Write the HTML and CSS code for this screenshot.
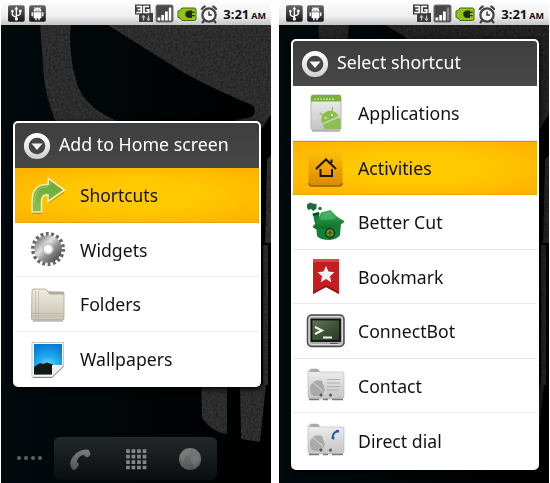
FILE: index.html
```html
<!DOCTYPE html>
<html lang="en">
<head>
<meta charset="utf-8">
<title>Home screen shortcuts</title>
<link rel="stylesheet" href="styles.css">
</head>
<body>
<svg class="defs" width="0" height="0" aria-hidden="true">
  <defs>
    <linearGradient id="dark" x1="0" y1="0" x2="0" y2="1"><stop offset="0" stop-color="#666"/><stop offset="1" stop-color="#161616"/></linearGradient>
    <linearGradient id="ring" x1="0" y1="0" x2="0" y2="1"><stop offset="0" stop-color="#fff"/><stop offset="1" stop-color="#d2d2d2"/></linearGradient>
    <linearGradient id="green" x1="0" y1="0" x2="0" y2="1"><stop offset="0" stop-color="#62a838"/><stop offset="1" stop-color="#8cc152"/></linearGradient>
    <linearGradient id="metal" x1="0" y1="0" x2="1" y2="1"><stop offset="0" stop-color="#888"/><stop offset=".35" stop-color="#e2e2e2"/><stop offset=".6" stop-color="#999"/><stop offset="1" stop-color="#555"/></linearGradient>
    <linearGradient id="paper" x1="0" y1="0" x2="0" y2="1"><stop offset="0" stop-color="#efebe0"/><stop offset="1" stop-color="#c9c3b4"/></linearGradient>
    <linearGradient id="silver" x1="0" y1="0" x2="0" y2="1"><stop offset="0" stop-color="#f0f0f0"/><stop offset="1" stop-color="#c4c4c4"/></linearGradient>
    <radialGradient id="sky" cx=".5" cy=".8" r=".8"><stop offset="0" stop-color="#8fe3ff"/><stop offset=".5" stop-color="#22aaf0"/><stop offset="1" stop-color="#087bd6"/></radialGradient>
    <linearGradient id="amber" x1="0" y1="0" x2="0" y2="1"><stop offset="0" stop-color="#ffbe0a"/><stop offset="1" stop-color="#d98a00"/></linearGradient>
    <linearGradient id="hut" x1="0" y1="0" x2="0" y2="1"><stop offset="0" stop-color="#3bb05b"/><stop offset="1" stop-color="#0a6a2a"/></linearGradient>
    <linearGradient id="screen" x1="0" y1="0" x2="1" y2="1"><stop offset="0" stop-color="#63785a"/><stop offset=".5" stop-color="#3f5539"/><stop offset="1" stop-color="#263a24"/></linearGradient>
    <linearGradient id="dockicon" x1="0" y1="0" x2="0" y2="1"><stop offset="0" stop-color="#7c7c7c"/><stop offset="1" stop-color="#545454"/></linearGradient>
    <clipPath id="page"><rect x="6" y="9" width="28.500" height="27"/></clipPath>
    <filter id="grain" x="0" y="0" width="1" height="1"><feTurbulence type="fractalNoise" baseFrequency=".4" numOctaves="3" seed="4" result="n"/><feColorMatrix in="n" type="matrix" values="0 0 0 0 0  0 0 0 0 0  0 0 0 0 0  1.2 0 0 0 -.5" result="m"/><feComposite in="m" in2="SourceGraphic" operator="in" result="d"/><feMerge><feMergeNode in="SourceGraphic"/><feMergeNode in="d"/></feMerge></filter>
    <symbol id="i-status" viewBox="0 0 40 18">
      <rect x="0" y="1" width="17" height="17" rx="2" fill="url(#dark)"/><rect x="21.500" y="1" width="17" height="17" rx="2" fill="url(#dark)"/>
      <path d="M8.500 4v11M4.500 7v3.500q0 1.500 4 2.500M12.500 7v2.500q0 1.500-4 2.500" fill="none" stroke="#fff" stroke-width="1.400"/><path d="M6.500 5.500l2-3 2 3z" fill="#fff"/><circle cx="8.500" cy="15" r="1.600" fill="#fff"/><circle cx="4.500" cy="7" r="1.300" fill="#fff"/><path d="M11.200 5.700h2.600v2.600h-2.600z" fill="#fff"/>
      <path d="M26 7.500a4 4 0 0 1 8 0zM26 8.300h8v5.200q0 .8-.8.800h-.9v2h-1.500v-2h-1.600v2h-1.500v-2h-.9q-.8 0-.8-.8zM23.900 8.300h1.400v4h-1.400zM34.700 8.300h1.400v4h-1.400z" fill="#fff"/><path d="M27 3l1.200 1.700M33 3l-1.200 1.700" stroke="#fff" stroke-width=".8"/><path d="M28.200 5.700h.9v.9h-.9zM31 5.700h.9v.9H31z" fill="#444"/>
    </symbol>
    <symbol id="i-signals" viewBox="0 0 82 20">
      <path d="M0 .5h15.500v8.500h2.500v9H4V10.500H0z" fill="#3c3c3c"/><path d="M1.500 2.500h4.800v6H1.300M2.500 5.500h3.700M14 2.500H9v6h4.700V5.800h-2.400" fill="none" stroke="#fff" stroke-width="1.700"/><path d="M8.500 16.500v-4M7 13.700l1.500-1.900 1.500 1.900M13.500 11.500v4.500M12 14.500l1.500 1.900 1.500-1.900" fill="none" stroke="#bbb" stroke-width="1.200"/>
      <rect x="21" y="1" width="17" height="17" rx="1.500" fill="#484848" stroke="#777"/><path d="M22.500 13.500h2.800v3h-2.800zM26.300 11h2.800v5.500h-2.800zM30 7.500h2.800v9H30z" fill="#fff"/><path d="M33.800 3.500h2.500v13h-2.500z" fill="currentColor"/>
      <path d="M47 4h12.500q1.500 0 1.500 1.500v9.500q0 1.500-1.500 1.500H47l-2-2.500-2-.5V7l2-.5z" fill="#8fc414" stroke="#476b0a"/><path d="M50 10q1-3.500 4-3.500h3v1.300h2.500v1.200H57v2h2.500v1.200H57V14h-3q-3 0-4-4z" fill="#232b12"/>
      <path d="M69.500 16l-2.500 3M78.500 16l2.500 3" stroke="#3a3a3a" stroke-width="2"/><circle cx="74" cy="11" r="6.600" fill="#f8f8f8" stroke="#444" stroke-width="2.300"/><path d="M74 7.500V11h3" fill="none" stroke="#333" stroke-width="1.400"/><path d="M66.300 5.800a9 9 0 0 1 4.200-3.800M81.700 5.800a9 9 0 0 0-4.200-3.800" stroke="#444" stroke-width="2" fill="none"/>
    </symbol>
    <symbol id="i-down" viewBox="0 0 28 28">
      <circle cx="14" cy="14" r="10.700" fill="#444" stroke="url(#ring)" stroke-width="4.800"/><path d="M8.500 11.500h11L14 18z" fill="#f4f4f4"/>
    </symbol>
    <symbol id="i-wall" viewBox="0 0 271 459">
      <g fill="#303030" filter="url(#grain)"><path d="M39 0h31q-3 28 5 56 6 25 37 39l14 8v28H70Q48 90 43 55zM105 0h166v90q-6 5-12 20h-24v-14l16-3q6-6 0-12-30-12-66-31zM266 135l5-4v88h-7zM200 361h26v49q-14-1-25-16zM239 361h26l-6 57-19-3z"/><path d="M262 221h5v140h-5z"/></g>
    </symbol>
  </defs>
</svg>
<main class="screens">
  <section class="phone">
    <svg class="wall"><use href="#i-wall"/></svg>
    <header class="status"><svg class="left"><use href="#i-status"/></svg><svg class="right"><use href="#i-signals"/></svg><div class="clock"><b>3:21</b><b class="am">AM</b></div></header>
    <div class="dialog home">
      <h1 class="title"><svg><use href="#i-down"/></svg><span>Add to Home screen</span></h1>
      <ul>
        <li class="on"><svg viewBox="0 0 40 40"><path d="M4 37V27Q4 9 20 9.500L20.500 3.500 36.500 15 20 26.500V20Q13 19 13.500 29v8z" fill="url(#green)" stroke="#f4edb0" stroke-width="1.600"/><path d="M4.500 38.300h9.500M21 27.800L36.500 17" stroke="#845f12" opacity=".55"/><path d="M6 28Q6 12 20 11.500M22 11V7" stroke="#b5dc86" fill="none" opacity=".7"/></svg><span>Shortcuts</span></li>
        <li><svg viewBox="0 0 40 40"><circle cx="20" cy="20" r="14.800" fill="none" stroke="#666" stroke-width="4.400" stroke-dasharray="2.800 2.366"/><circle cx="20" cy="20" r="9.500" fill="none" stroke="url(#metal)" stroke-width="8.500"/><circle cx="20" cy="20" r="5" fill="#fff" stroke="#bbb" stroke-width="1.600"/></svg><span>Widgets</span></li>
        <li><svg viewBox="0 0 40 40"><path d="M4 7q0-2 2-2h11q2 0 3 3h15q1 0 1 1.500V34q0 2-2 2H5q-1.500 0-1.500-2z" fill="url(#paper)" stroke="#aaa390" stroke-width=".8"/><path d="M19.500 7.500l2 3H36V8z" fill="#b0a996"/><path d="M4 29.500h32M4 32h32M7.500 7v27M10.500 7v27" stroke="#b8b09e" stroke-width=".6"/><path d="M5 37h30" stroke="#999"/></svg><span>Folders</span></li>
        <li><svg viewBox="0 0 40 40"><path d="M4 3.500h31.500V27L24 38H4z" fill="#fafafa" stroke="#c8c8c8"/><path d="M6 5h28v21h-10v9.500H6z" fill="url(#sky)"/><path d="M6 28l6-4 3 1 4-1.500 6 2-1 10H6z" fill="#121814"/><path d="M24 26l11 1-11 10.500z" fill="#eee"/><path d="M5 38.500h19L35.500 27.500" fill="none" stroke="#888"/></svg><span>Wallpapers</span></li>
      </ul>
    </div>
    <nav class="dots"><i></i><i></i><i></i><i></i></nav>
    <div class="dock">
      <svg viewBox="0 0 26 26"><path d="M4.500 24Q0 17 5 11 10 4 18 3q4-1 5 1l1.500 4q-2 3-4.500 3l-3.500-2.500Q11 10 9.500 16l2.500 2.500q-1 4-4 6-2 1-3.500-.5z" fill="url(#dockicon)"/></svg>
      <svg viewBox="0 0 26 26"><path d="M4.300 2.500v22M10.200 2.500v22M16.200 2.500v22M22.200 2.500v22" stroke="#858585" stroke-width="4" stroke-dasharray="4 1.900"/></svg>
      <svg viewBox="0 0 26 26"><circle cx="12" cy="13" r="12" fill="url(#dockicon)"/><path d="M2 8l6-5 5 1-2 5-5 2-2 6-3-5zM13 11l7-3 3 5-5 8-5-5z" fill="#8a8a8a" opacity=".35"/></svg>
    </div>
  </section>
  <section class="phone dim">
    <svg class="wall"><use href="#i-wall"/></svg>
    <header class="status"><svg class="left"><use href="#i-status"/></svg><svg class="right"><use href="#i-signals"/></svg><div class="clock"><b>3:21</b><b class="am">AM</b></div></header>
    <div class="dialog select">
      <h1 class="title"><svg><use href="#i-down"/></svg><span>Select shortcut</span></h1>
      <ul>
        <li><svg viewBox="0 0 40 40"><rect x="5" y="2" width="30" height="35" rx="2" fill="url(#silver)" stroke="#b5b5b5"/><path d="M5 4q0-2 2-2h26q2 0 2 2v4.500H5z" fill="#77b13a"/><path d="M9 7V5.500M12 7V5.500M15 7V5.500M18 7V5.500M21 7V5M24 7V5.500M27 7V5" stroke="#dcefc8" stroke-width="1.200"/><g clip-path="url(#page)"><g transform="rotate(-24 25 27)" fill="#8cc04b"><path d="M15.500 26.500a9 9 0 0 1 18 0zM15.500 28h18v14h-18z"/><path d="M19.500 19.500l-2-3.500M29.500 19.500l2-3.500" stroke="#8cc04b" stroke-width="1.300"/><circle cx="21" cy="23" r=".9" fill="#fff"/><circle cx="28" cy="23" r=".9" fill="#fff"/></g></g><path d="M6 38h28" stroke="#888"/></svg><span>Applications</span></li>
        <li class="on"><svg viewBox="0 0 40 40"><rect x="2.500" y="3.500" width="34" height="34" rx="3" fill="url(#amber)"/><path d="M3 35q0 3 3 3h27q3 0 3-3" fill="none" stroke="#8f5c00" stroke-width="1.500"/><path d="M10 21l10-9.500L30 21M25.500 15v-3.500M14.500 21v7h11.500v-7" fill="none" stroke="#19140a" stroke-width="2"/></svg><span>Activities</span></li>
        <li><svg viewBox="0 0 40 40"><path d="M10 23l1 11q3 4 13 4 8-1 10-5l1-12z" fill="#128038"/><path d="M7 12l6-1.500L14 20l-5 2z" fill="#197a3a"/><path d="M6.500 11.500l6.500-1.500.5 2.500-6.500 1.500z" fill="#0b4c22"/><path d="M6.500 25Q13 18 15 10.500L24.500 8Q31 16 38.500 19q-1 3-4 3.500-14 6-25 4.500z" fill="url(#hut)"/><path d="M16 12l8-2.500q3 4 6 7-8 2-16 1.500z" fill="#67c77e" opacity=".45"/><circle cx="24" cy="31" r="4.500" fill="#7d8a1e" stroke="#0a3c18" stroke-width="1.500"/><path d="M21.500 31h5M24 28.500v5" stroke="#31511a"/><path d="M1 2.500L4 .5l2.500 1 4 .5v4.500l-3 2.500-2.500-2-3 1-1-3z" fill="#1d6c3a"/><circle cx="14" cy="6.500" r="1.700" fill="#176f38"/></svg><span>Better Cut</span></li>
        <li><svg viewBox="0 0 40 40"><path d="M7 3h26v35l-13-7-13 7z" fill="#c51e22"/><path d="M7 3h26v3H7z" fill="#dc474a"/><path d="M7 36l13-7 13 7v2l-13-7-13 7z" fill="#8f1518"/><path d="M20 10l2.500 5.600 6 .6-4.600 4 1.400 6L20 23l-5.300 3.200 1.400-6-4.600-4 6-.6z" fill="#f3f3f3"/></svg><span>Bookmark</span></li>
        <li><svg viewBox="0 0 40 40"><rect x="1.500" y="4" width="36.500" height="31.500" rx="4" fill="#aaa" stroke="#4c4c4c" stroke-width="1.500"/><rect x="3" y="5.500" width="33.500" height="28" rx="3" fill="none" stroke="#ddd"/><rect x="5.500" y="8.500" width="28.500" height="21.500" fill="url(#screen)" stroke="#111" stroke-width="1.800"/><path d="M9 16l7 3.500-7 3.500M17 26.500h9" fill="none" stroke="#f2f2f2" stroke-width="2"/><path d="M24 32.500h8" stroke="#555"/></svg><span>ConnectBot</span></li>
        <li><svg viewBox="0 0 40 40"><use href="#card"/><path d="M21 14.500h13M21 18h13M21 21.500h13M21 25h12" stroke="#aaa" stroke-width=".9"/></svg><span>Contact</span></li>
        <li><svg viewBox="0 0 40 40"><g id="card"><path d="M2 9V6l2-2h8l2 3h22q2 0 2 2v22q0 3-3 3H5q-3 0-3-3z" fill="url(#silver)" stroke="#bbb" stroke-width=".7"/><path d="M3 7l2-3h7l2 3z" fill="#aaa"/><path d="M4 22q3-9 12-6l3 9-4 6H8q-5-2-4-9z" fill="#aaa"/><path d="M5 16l12 10" stroke="#ddd"/><path d="M3 34.500h10M17 34.500h5M26 34.500h11" stroke="#777" stroke-width="1.600"/><circle cx="15" cy="30" r="1.500" fill="#555"/><circle cx="24.500" cy="30" r="1.500" fill="#555"/></g><path d="M26.500 18.500q0-6 5-7.500" fill="none" stroke="#2b57a8" stroke-width="1.900"/><path d="M30 11.200h3M26 17.500l2.300 1" stroke="#2b57a8" stroke-width="2.600"/></svg><span>Direct dial</span></li>
      </ul>
    </div>
  </section>
</main>
</body>
</html>
```
FILE: styles.css
```css
* { box-sizing: border-box; }
body { margin: 0; width: 550px; height: 483px; overflow: hidden; background: #fff; font-family: "Noto Sans", sans-serif; }
.defs { position: absolute; }
.screens { display: flex; gap: 8px; padding-left: 1px; }
.phone { position: relative; width: 270px; height: 483px; background: linear-gradient(90deg, #020a0d, #010405 60%, #000); overflow: hidden; flex: none; color: #fff; }
.dim { color: #8a8a8a; }
.wall { position: absolute; left: 0; top: 24px; width: 271px; height: 459px; }
.dim .wall { opacity: .75; }
.status { position: relative; display: flex; height: 25px; background: linear-gradient(#fff, #eee 65%, #c5c5c5); padding: 4px 5px 0 7px; }
.left { width: 40px; height: 18px; }
.right { width: 82px; height: 20px; margin-left: 88px; overflow: visible; }
.clock { display: flex; align-items: baseline; gap: 2px; margin-left: 6px; font-size: 13px; line-height: 20px; color: #111; white-space: nowrap; }
.am { font-size: 9px; }
.dialog { position: relative; width: 248px; margin-left: 12px; border: 2px solid #fff; border-radius: 5px; background: #fff; box-shadow: 0 2px 6px #000; }
.home { margin-top: 96px; height: 266px; }
.select { margin-top: 14px; height: 431px; }
.title { display: flex; align-items: center; height: 45px; margin: 0; padding: 1px 8px 0; gap: 8px; background: linear-gradient(#3e3e3e, #474747); color: #fff; font-weight: 400; font-size: 18.500px; border-radius: 3px 3px 0 0; white-space: nowrap; }
.title svg { width: 28px; height: 28px; flex: none; }
.title span { line-height: 22px; margin-top: -5px; transform-origin: left; transform: scaleX(.96); }
ul { list-style: none; margin: 0; padding: 0; }
li { display: flex; align-items: center; height: 54.500px; padding-left: 13px; gap: 12px; border-bottom: 1px solid #e9e9e9; font-size: 18.500px; color: #111; white-space: nowrap; }
li:last-child { border-bottom: 0; }
li svg { width: 40px; height: 40px; flex: none; }
li span { line-height: 24px; margin-top: 1px; transform-origin: left; transform: scaleX(.955); }
.on { background: radial-gradient(ellipse at center, #ffc800 40%, #ffb000); border-bottom-color: #f0a600; }
.select .on { border-top: 1px solid #d79200; }
.home .on span { transform: scaleX(.94); }
.dots { display: flex; gap: 3px; margin: 69px 0 0 16px; position: absolute; top: 387px; }
.dots i { width: 4px; height: 4px; border-radius: 50%; background: #606060; }
.dock { position: relative; display: flex; justify-content: space-between; align-items: center; width: 163px; height: 43px; margin: 50px 0 0 53px; padding: 0 14px; border-radius: 6px; background: linear-gradient(#23282a, #090d0e); }
.dock svg { width: 24px; height: 24px; }
```
